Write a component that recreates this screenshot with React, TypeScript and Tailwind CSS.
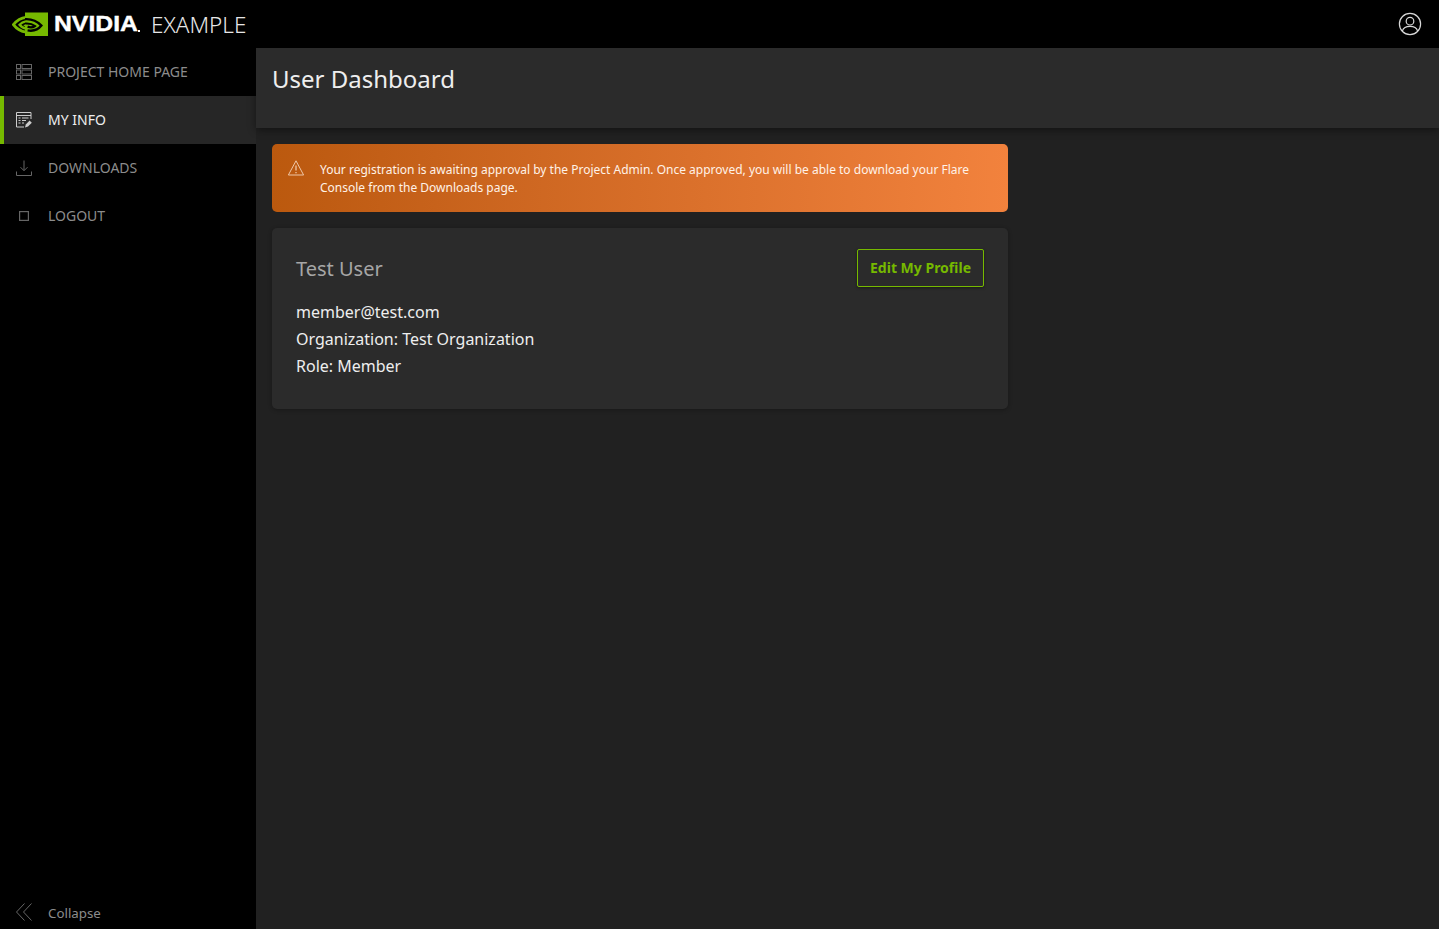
const font = { fontFamily: '"Noto Sans", sans-serif' };

function NvidiaEye() {
  return (
    <svg width="37" height="25" viewBox="0 0 37 25" className="shrink-0">
      <rect x="13" y="0.5" width="23" height="23.5" fill="#76b900" />
      {/* left half: green arcs on black */}
      <path d="M14 5.4C8.6 6 4.4 9 1.4 12.6 4.4 16.6 8.8 19.4 14.4 20.2" fill="none" stroke="#76b900" strokeWidth="2.8" />
      <path d="M14 9.4C11.4 9.8 9.2 11 7.6 12.8 9.2 15 11.6 16.2 14 16.6" fill="none" stroke="#76b900" strokeWidth="2.4" />
      {/* right half: black swoosh cut out of the green */}
      <path d="M13 7.2C19.6 6.8 25 9 29.4 13.6 26.4 17.4 21.4 19.4 15.6 18.4" fill="none" stroke="#000" strokeWidth="2.4" />
      <path d="M13 11.6C17.6 11.2 20.4 12 23 14 20.8 15.6 18.2 15.6 15.6 14.6" fill="none" stroke="#000" strokeWidth="2.2" />
      <path d="M14 12.4C12.8 12.4 12 12.6 11.2 13 12 14 13 14.6 14 14.8Z" fill="#76b900" />
    </svg>
  );
}

function HomeIcon() {
  return (
    <svg width="16" height="16" viewBox="0 0 16 16" fill="none" stroke="currentColor" strokeWidth="1">
      <rect x="0.5" y="0.5" width="4" height="4" />
      <rect x="6" y="0.5" width="9.5" height="4" />
      <rect x="0.5" y="6" width="4" height="4" />
      <rect x="6" y="6" width="9.5" height="4" />
      <rect x="0.5" y="11.5" width="4" height="4" />
      <rect x="6" y="11.5" width="9.5" height="4" />
    </svg>
  );
}

function InfoIcon() {
  return (
    <svg width="16" height="16" viewBox="0 0 16 16" fill="none" stroke="currentColor" strokeWidth="1">
      <path d="M8 15H0.5V0.5H15V7" />
      <path d="M0.5 3.5H15" />
      <path d="M2.5 6H4.5M6 6H12.5M2.5 8.5H4.5M6 8.5H10M2.5 11H4.5M6 11H8" />
      <path d="M9 15.5L9.8 12.4L13.6 8.6L15.8 10.8L12 14.6Z" fill="currentColor" stroke="none" />
    </svg>
  );
}

function DownloadIcon() {
  return (
    <svg width="16" height="16" viewBox="0 0 16 16" fill="none" stroke="currentColor" strokeWidth="1">
      <path d="M8 0.5V10.5M4.5 7.2L8 10.7L11.5 7.2" />
      <path d="M0.5 11.5V15.5H15.5V11.5" />
    </svg>
  );
}

function LogoutIcon() {
  return (
    <svg width="16" height="16" viewBox="0 0 16 16" fill="none" stroke="currentColor" strokeWidth="1.2">
      <rect x="3.6" y="3.6" width="8.8" height="8.8" />
    </svg>
  );
}

const navItems = [
  { label: "PROJECT HOME PAGE", icon: <HomeIcon /> },
  { label: "MY INFO", icon: <InfoIcon />, active: true },
  { label: "DOWNLOADS", icon: <DownloadIcon /> },
  { label: "LOGOUT", icon: <LogoutIcon /> },
];

export default function App() {
  return (
    <div className="flex h-[929px] w-full flex-col overflow-hidden bg-[#212121]" style={font}>
      <header className="flex h-12 shrink-0 items-center justify-between bg-black pl-3 pr-[17px]">
        <div className="flex items-center">
          <NvidiaEye />
          <span className="ml-[5px] w-[84px] origin-left scale-x-[1.1] text-[22.5px] leading-none font-bold text-white [-webkit-text-stroke:0.4px_white] [font-family:'Liberation_Sans',sans-serif]">
            NVIDIA
          </span>
          <span className="mt-[13px] h-[2px] w-[2px] bg-white" />
          <span className="ml-[11px] mt-[2px] text-[22.5px] font-light leading-none text-[#e6e6e6]">EXAMPLE</span>
        </div>
        <svg width="24" height="24" viewBox="0 0 24 24" fill="none" stroke="#d8d8d8" strokeWidth="1.2">
          <circle cx="12" cy="12" r="10.6" />
          <circle cx="12" cy="9.2" r="3.8" />
          <path d="M4.4 19C5.4 15.6 8.4 14.4 12 14.4C15.6 14.4 18.6 15.6 19.6 19" />
        </svg>
      </header>

      <div className="flex min-h-0 flex-1">
        <aside className="flex w-[256px] shrink-0 flex-col justify-between bg-black">
          <nav>
            {navItems.map((item) => (
              <div
                key={item.label}
                className={`flex h-12 items-center gap-4 text-sm ${
                  item.active
                    ? "border-l-4 border-[#76b900] bg-[#262626] pl-3 text-[#eeeeee]"
                    : "pl-4 text-[#8c8c8c]"
                }`}
              >
                <span className={item.active ? "text-[#cccccc]" : "text-[#666666]"}>{item.icon}</span>
                <span>{item.label}</span>
              </div>
            ))}
          </nav>
          <div className="flex h-[34px] items-center gap-4 pl-4 text-[13.3px] text-[#8c8c8c]">
            <svg width="16" height="18" viewBox="0 0 16 18" fill="none" stroke="#666666" strokeWidth="1">
              <path d="M8.5 0.5L0.5 9L8.5 17.5M15.5 0.5L7.5 9L15.5 17.5" />
            </svg>
            <span className="mt-[3px]">Collapse</span>
          </div>
        </aside>

        <main className="min-w-0 flex-1">
          <div className="h-20 bg-[#2b2b2b] px-4 pt-[13px] shadow-[0_2px_8px_rgba(0,0,0,0.45)]">
            <h1 className="text-2xl leading-9 font-normal text-[#eeeeee]">User Dashboard</h1>
          </div>

          <div className="w-[736px] pt-4 pl-4">
            <div className="flex h-[68px] w-[736px] items-start gap-4 rounded-[5px] bg-gradient-to-r from-[#bb590e] to-[#f2823d] pt-[17px] pl-4 pr-6">
              <svg width="16" height="16" viewBox="0 0 16 16" fill="none" stroke="#eec7a8" strokeWidth="1" className="mt-[-1px] shrink-0">
                <path d="M8 0.8L15.6 15H0.4Z" />
                <path d="M8 5.4V10.6" strokeWidth="1.3" />
                <path d="M8 12V13.2" strokeWidth="1.3" />
              </svg>
              <p className="text-xs leading-[18px] text-[#fff2e8]">
                Your registration is awaiting approval by the Project Admin. Once approved, you will be able to download your Flare Console from the Downloads page.
              </p>
            </div>

            <div className="mt-4 h-[181px] w-[736px] rounded-[5px] bg-[#2b2b2b] px-6 pt-[21px] shadow-[0_1px_4px_rgba(0,0,0,0.3)]">
              <div className="flex items-center justify-between">
                <h2 className="pt-[2px] text-xl font-normal text-[#a6a6a6]">Test User</h2>
                <button className="flex h-[38px] w-[127px] items-center justify-center rounded-[2px] border border-[#76b900] text-sm font-bold text-[#76b900] shadow-[0_1px_3px_rgba(0,0,0,0.4)]">
                  Edit My Profile
                </button>
              </div>
              <div className="mt-[12px] text-base leading-[27px] text-[#eeeeee]">
                <p>member@test.com</p>
                <p>Organization: Test Organization</p>
                <p>Role: Member</p>
              </div>
            </div>
          </div>
        </main>
      </div>
    </div>
  );
}
